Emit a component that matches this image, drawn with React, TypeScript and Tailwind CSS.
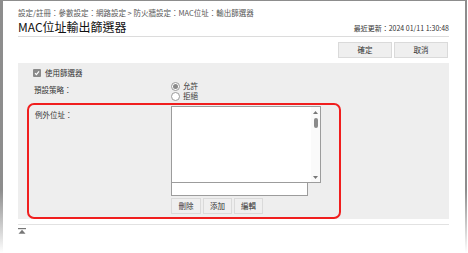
import { useState } from "react";

function Checkbox() {
  return (
    <span className="flex h-[8px] w-[8px] items-center justify-center rounded-[1px] bg-[#8a8a8a]">
      <svg width="6" height="6" viewBox="0 0 6 6">
        <path d="M1 3.2 L2.4 4.6 L5 1.4" fill="none" stroke="#fff" strokeWidth="1.2" />
      </svg>
    </span>
  );
}

function Radio({ checked }: { checked?: boolean }) {
  return (
    <span className="flex h-[9px] w-[9px] items-center justify-center rounded-full border border-[#9a9a9a] bg-white">
      {checked && <span className="h-[5px] w-[5px] rounded-full bg-[#8a8a8a]" />}
    </span>
  );
}

function SmallButton({ label, w }: { label: string; w: string }) {
  return (
    <button
      type="button"
      className={`${w} h-[16px] border border-[#dadada] bg-[#efefef] text-[7.5px] leading-none text-[#333]`}
    >
      {label}
    </button>
  );
}

export default function App() {
  const [allow] = useState(true);

  return (
    <div className="h-[253px] w-[468px] overflow-hidden bg-white font-['Noto_Sans_CJK_TC','Noto_Sans',sans-serif]">
      {/* window frame */}
      <div className="h-[253px] w-[467px] bg-gradient-to-b from-[#8d8d8d] from-75% to-white pl-[3px] pr-[2px] pt-[1px]">
        <div className="h-full bg-white pl-[15px] pr-[16px] pt-[5px]">
          {/* breadcrumb */}
          <div className="h-[13px] text-[7.5px] leading-[13px] text-[#555]">
            設定/註冊：參數設定：網路設定 &gt; 防火牆設定：MAC位址：輸出篩選器
          </div>

          {/* title row */}
          <div className="flex h-[18px] items-end justify-between border-b border-[#dcdcdc] pb-[1px]">
            <h1 className="text-[12px] leading-[16px] text-[#111]">MAC位址輸出篩選器</h1>
            <span className="mb-[2px] text-[7px] leading-[10px] text-[#333]">
              最近更新：2024 01/11 1:30:48
            </span>
          </div>

          {/* actions */}
          <div className="mt-[5px] flex justify-end gap-[2px] pr-[1px]">
            <SmallButton label="確定" w="w-[54px] h-[15px]" />
            <SmallButton label="取消" w="w-[54px] h-[15px]" />
          </div>

          {/* settings panel */}
          <div className="mt-[5px] bg-[#eeeeee] pt-[4px] text-[7.5px] text-[#333]">
            <div className="flex h-[12px] items-center gap-[4px] pl-[15px]">
              <Checkbox />
              <span>使用篩選器</span>
            </div>

            <div className="mt-[2px] flex pl-[16px]">
              <div className="w-[137px] pt-[3px] leading-[12px]">預設策略：</div>
              <div className="flex flex-col">
                <label className="flex h-[10px] items-center gap-[3px]">
                  <Radio checked={allow} />
                  <span>允許</span>
                </label>
                <label className="flex h-[10px] items-center gap-[3px]">
                  <Radio checked={!allow} />
                  <span>拒絕</span>
                </label>
              </div>
            </div>

            {/* exception addresses */}
            <div className="ml-[9px] mt-[2px] flex w-[314px] rounded-[7px] border-2 border-[#f01e1e] pb-[3px] pt-[1px]">
              <div className="w-[142px] pl-[6px] pt-[3px] leading-[12px]">例外位址：</div>
              <div className="flex flex-col">
                <div className="flex h-[77px] w-[150px] border border-[#9c9c9c] bg-white">
                  <div className="flex-1" />
                  <div className="flex w-[9px] flex-col items-center bg-[#fafafa] pt-[4px]">
                    <svg width="5" height="3" viewBox="0 0 5 3">
                      <path d="M2.5 0 L5 3 L0 3 Z" fill="#777" />
                    </svg>
                    <span className="mt-[4px] h-[10px] w-[4px] rounded-[2px] bg-[#8a8a8a]" />
                    <div className="flex-1" />
                    <svg className="mb-[3px]" width="5" height="3" viewBox="0 0 5 3">
                      <path d="M0 0 L5 0 L2.5 3 Z" fill="#777" />
                    </svg>
                  </div>
                </div>
                <input
                  className="-mt-px h-[14px] w-[137px] border border-[#9c9c9c] bg-white outline-none"
                  readOnly
                />
                <div className="mt-[2px] flex gap-[2px]">
                  <SmallButton label="刪除" w="w-[30px]" />
                  <SmallButton label="添加" w="w-[29px]" />
                  <SmallButton label="編輯" w="w-[29px]" />
                </div>
              </div>
            </div>
          </div>

          {/* footer */}
          <div className="mt-[5px] border-t border-[#e2e2e2] pt-[3px]">
            <svg width="8" height="6" viewBox="0 0 8 6">
              <rect x="0" y="0" width="8" height="1.2" fill="#777" />
              <path d="M4 1.8 L7.5 5.8 L0.5 5.8 Z" fill="#777" />
            </svg>
          </div>
        </div>
      </div>
    </div>
  );
}
